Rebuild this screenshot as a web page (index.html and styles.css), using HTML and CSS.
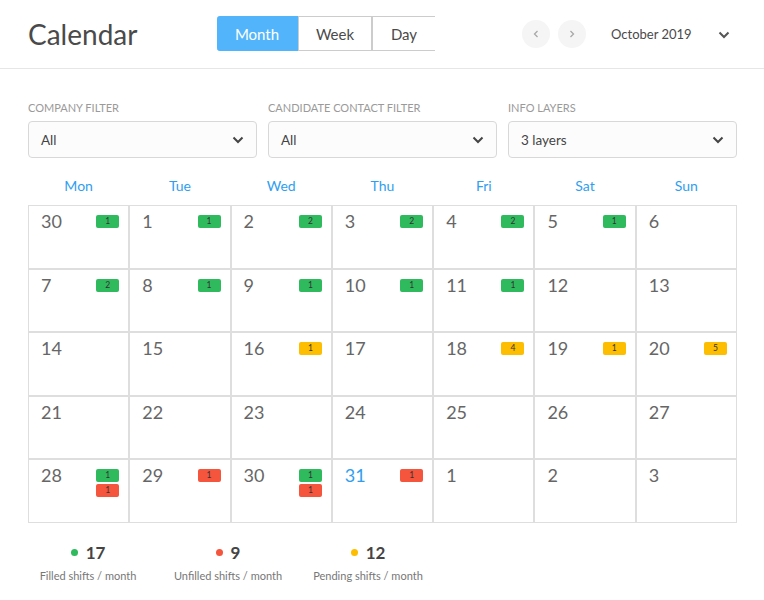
FILE: index.html
```html
<!DOCTYPE html>
<html>
<head>
<meta charset="utf-8">
<link rel="stylesheet" href="styles.css">
</head>
<body>
<div class="page">
  <header class="topbar">
    <h1 class="title">Calendar</h1>
    <div class="seg">
      <button class="seg-btn active">Month</button>
      <button class="seg-btn">Week</button>
      <button class="seg-btn last">Day</button>
    </div>
    <div class="nav">
      <span class="circle"><svg width="10" height="10" viewBox="0 0 10 10"><polyline points="6.5,2 3.5,5 6.5,8" fill="none" stroke="#a8a8a8" stroke-width="1.3"/></svg></span>
      <span class="circle"><svg width="10" height="10" viewBox="0 0 10 10"><polyline points="3.5,2 6.5,5 3.5,8" fill="none" stroke="#a8a8a8" stroke-width="1.3"/></svg></span>
      <span class="month">October 2019</span>
      <svg class="caret" width="12" height="8" viewBox="0 0 12 8"><polyline points="1.5,1.5 6,6 10.5,1.5" fill="none" stroke="#555" stroke-width="2"/></svg>
    </div>
  </header>

  <section class="filters">
    <div class="filter">
      <div class="flabel">COMPANY FILTER</div>
      <div class="select"><span>All</span><svg width="12" height="8" viewBox="0 0 12 8"><polyline points="1.5,1.5 6,6 10.5,1.5" fill="none" stroke="#444" stroke-width="2"/></svg></div>
    </div>
    <div class="filter">
      <div class="flabel">CANDIDATE CONTACT FILTER</div>
      <div class="select"><span>All</span><svg width="12" height="8" viewBox="0 0 12 8"><polyline points="1.5,1.5 6,6 10.5,1.5" fill="none" stroke="#444" stroke-width="2"/></svg></div>
    </div>
    <div class="filter">
      <div class="flabel">INFO LAYERS</div>
      <div class="select"><span>3 layers</span><svg width="12" height="8" viewBox="0 0 12 8"><polyline points="1.5,1.5 6,6 10.5,1.5" fill="none" stroke="#444" stroke-width="2"/></svg></div>
    </div>
  </section>

  <section class="cal">
    <div class="dows">
      <div>Mon</div><div>Tue</div><div>Wed</div><div>Thu</div><div>Fri</div><div>Sat</div><div>Sun</div>
    </div>
    <div class="grid">
      <div class="cell"><span class="num">30</span><div class="badges"><span class="b g">1</span></div></div>
      <div class="cell"><span class="num">1</span><div class="badges"><span class="b g">1</span></div></div>
      <div class="cell"><span class="num">2</span><div class="badges"><span class="b g">2</span></div></div>
      <div class="cell"><span class="num">3</span><div class="badges"><span class="b g">2</span></div></div>
      <div class="cell"><span class="num">4</span><div class="badges"><span class="b g">2</span></div></div>
      <div class="cell"><span class="num">5</span><div class="badges"><span class="b g">1</span></div></div>
      <div class="cell"><span class="num">6</span></div>

      <div class="cell"><span class="num">7</span><div class="badges"><span class="b g">2</span></div></div>
      <div class="cell"><span class="num">8</span><div class="badges"><span class="b g">1</span></div></div>
      <div class="cell"><span class="num">9</span><div class="badges"><span class="b g">1</span></div></div>
      <div class="cell"><span class="num">10</span><div class="badges"><span class="b g">1</span></div></div>
      <div class="cell"><span class="num">11</span><div class="badges"><span class="b g">1</span></div></div>
      <div class="cell"><span class="num">12</span></div>
      <div class="cell"><span class="num">13</span></div>

      <div class="cell"><span class="num">14</span></div>
      <div class="cell"><span class="num">15</span></div>
      <div class="cell"><span class="num">16</span><div class="badges"><span class="b y">1</span></div></div>
      <div class="cell"><span class="num">17</span></div>
      <div class="cell"><span class="num">18</span><div class="badges"><span class="b y">4</span></div></div>
      <div class="cell"><span class="num">19</span><div class="badges"><span class="b y">1</span></div></div>
      <div class="cell"><span class="num">20</span><div class="badges"><span class="b y">5</span></div></div>

      <div class="cell"><span class="num">21</span></div>
      <div class="cell"><span class="num">22</span></div>
      <div class="cell"><span class="num">23</span></div>
      <div class="cell"><span class="num">24</span></div>
      <div class="cell"><span class="num">25</span></div>
      <div class="cell"><span class="num">26</span></div>
      <div class="cell"><span class="num">27</span></div>

      <div class="cell"><span class="num">28</span><div class="badges"><span class="b g">1</span><span class="b r">1</span></div></div>
      <div class="cell"><span class="num">29</span><div class="badges"><span class="b r">1</span></div></div>
      <div class="cell"><span class="num">30</span><div class="badges"><span class="b g">1</span><span class="b r">1</span></div></div>
      <div class="cell"><span class="num today">31</span><div class="badges"><span class="b r">1</span></div></div>
      <div class="cell"><span class="num">1</span></div>
      <div class="cell"><span class="num">2</span></div>
      <div class="cell"><span class="num">3</span></div>
    </div>
  </section>

  <section class="stats">
    <div class="stat">
      <div class="sv"><span class="dot dg"></span><span class="n">17</span></div>
      <div class="sl">Filled shifts / month</div>
    </div>
    <div class="stat">
      <div class="sv"><span class="dot dr"></span><span class="n">9</span></div>
      <div class="sl">Unfilled shifts / month</div>
    </div>
    <div class="stat">
      <div class="sv"><span class="dot dy"></span><span class="n">12</span></div>
      <div class="sl">Pending shifts / month</div>
    </div>
  </section>
</div>
</body>
</html>
```

FILE: styles.css
```css
* { box-sizing: border-box; }
html, body { margin: 0; padding: 0; background: #fff; }
body {
  font-family: "Lato", "Open Sans", "Liberation Sans", sans-serif;
  color: #555;
  width: 764px;
  height: 600px;
  overflow: hidden;
}
.page { width: 764px; }

.topbar {
  height: 69px;
  border-bottom: 1px solid #e6e6e6;
  display: flex;
  align-items: center;
  padding-left: 28px;
}
.title {
  margin: 0;
  font-size: 28px;
  font-weight: 400;
  color: #4a4a4a;
  width: 189px;
  line-height: 1;
  padding-bottom: 1px;
}
.seg {
  display: flex;
  height: 35px;
  margin-top: -1px;
}
.seg-btn {
  font-family: inherit;
  font-size: 15px;
  color: #4a4a4a;
  background: #fff;
  border: 1px solid #ccc;
  border-left: none;
  padding: 0;
  height: 35px;
  margin: 0;
}
.seg-btn:nth-child(1) { width: 81px; }
.seg-btn:nth-child(2) { width: 74px; border-left: 1px solid #ccc; }
.seg-btn:nth-child(3) { width: 63px; border-left: 1px solid #ccc; border-right: none; }
.seg-btn.active {
  background: #52b4fb;
  border-color: #52b4fb;
  color: #fff;
  border-radius: 3px 0 0 3px;
}
.seg-btn.last { border-radius: 0; }

.nav {
  display: flex;
  align-items: center;
  margin-left: 87px;
}
.circle {
  width: 28px;
  height: 28px;
  border-radius: 50%;
  background: #f5f5f5;
  display: flex;
  align-items: center;
  justify-content: center;
  margin-right: 8px;
}
.month {
  margin-left: 17px;
  font-size: 13px;
  color: #4a4a4a;
  width: 107px;
}
.caret { margin-top: 1px; }

.filters {
  display: flex;
  gap: 11px;
  padding: 32px 27px 0 28px;
}
.filter { flex: 1; }
.flabel {
  font-size: 11px;
  color: #9a9a9a;
  letter-spacing: 0;
  height: 14px;
  line-height: 14px;
  margin-bottom: 6px;
}
.select {
  height: 37px;
  border: 1px solid #d8d8d8;
  border-radius: 4px;
  background: #fcfcfc;
  display: flex;
  align-items: center;
  justify-content: space-between;
  padding: 0 12px 0 12px;
  font-size: 13.5px;
  color: #444;
}
.select span { padding-top: 1px; }

.cal { padding: 0 27px 0 28px; }
.dows {
  display: grid;
  grid-template-columns: repeat(7, 1fr);
  height: 47px;
  align-items: center;
}
.dows div {
  text-align: center;
  color: #2f9ef0;
  font-size: 14px;
  padding-top: 7px;
}
.grid {
  display: grid;
  grid-template-columns: repeat(7, 1fr);
  grid-auto-rows: 63.6px;
}
.cell {
  border: 1px solid #dedede;
  display: flex;
  justify-content: space-between;
  padding: 5px 9px 0 12px;
}
.num {
  font-size: 18px;
  color: #666;
  line-height: 20px;
  margin-top: 0;
}
.num.today { color: #2f9ef0; }
.badges {
  display: flex;
  flex-direction: column;
  gap: 2px;
  padding-top: 4px;
}
.b {
  width: 23px;
  height: 13px;
  border-radius: 2px;
  font-size: 8.5px;
  line-height: 13px;
  text-align: center;
  color: #333;
}
.b.g { background: #2fba5d; }
.b.r { background: #f5543d; }
.b.y { background: #fdbd00; }

.stats {
  display: flex;
  padding: 19px 0 0 18px;
}
.stat {
  width: 140px;
  text-align: center;
}
.sv {
  display: flex;
  align-items: center;
  justify-content: center;
  height: 22px;
}
.dot {
  width: 7px;
  height: 7px;
  border-radius: 50%;
  margin-right: 8px;
}
.dg { background: #2fba5d; }
.dr { background: #f5543d; }
.dy { background: #fdbd00; }
.n {
  font-size: 17px;
  font-weight: 700;
  color: #444;
}
.sl {
  font-size: 11px;
  color: #777;
  margin-top: 5px;
}
```
